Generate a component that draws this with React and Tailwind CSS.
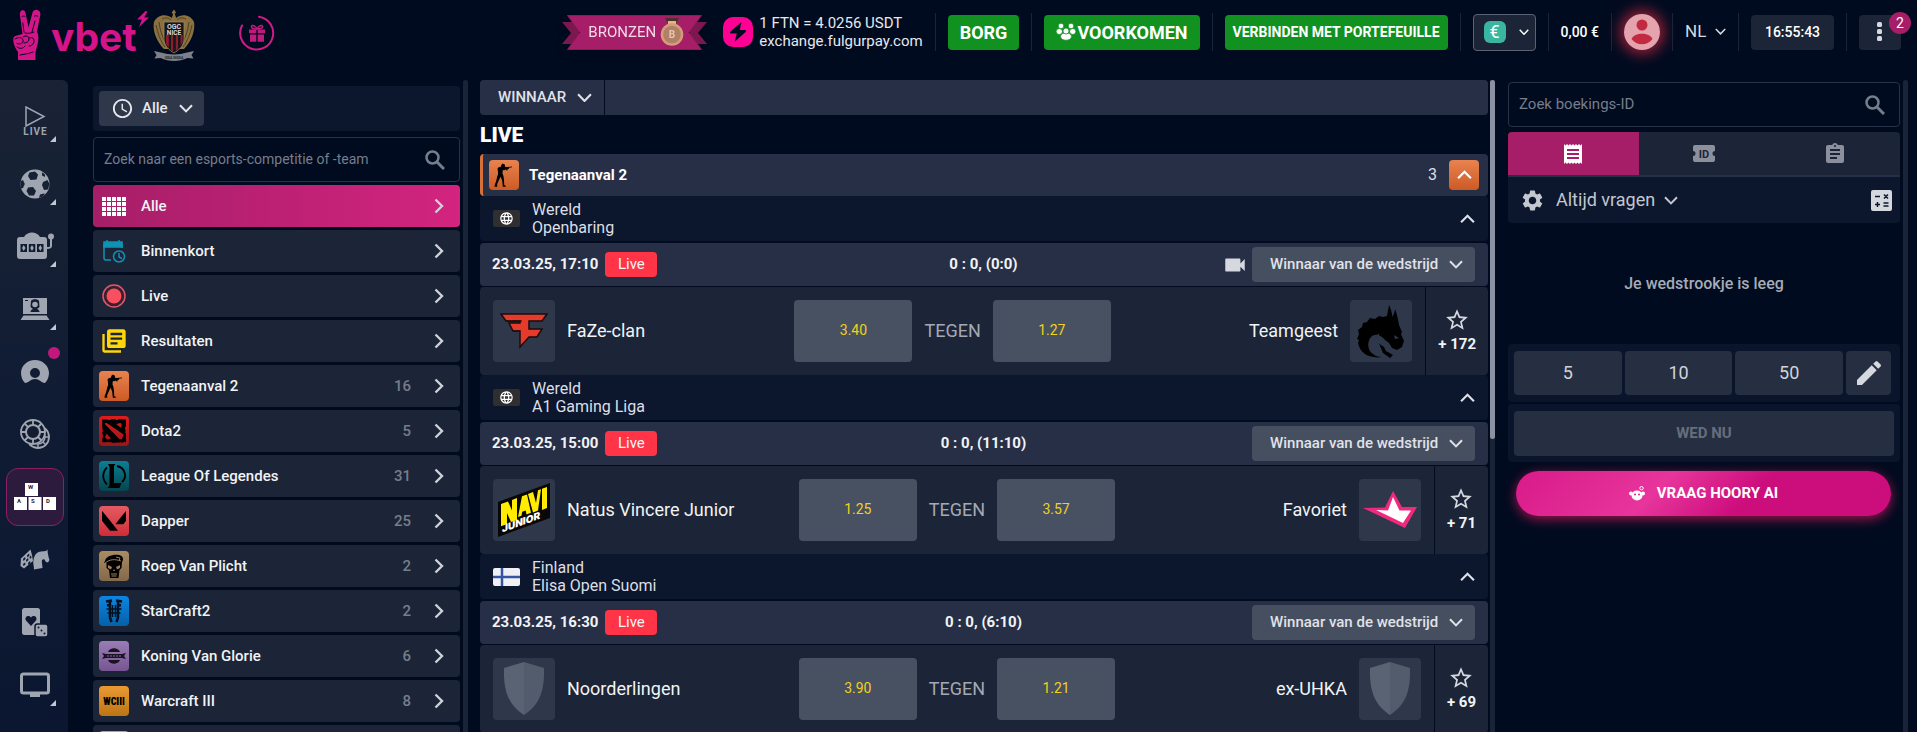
import React, { useState } from "react";
import {
  MdAccessTime,
  MdAssignment,
  MdEdit,
  MdLanguage,
  MdLibraryBooks,
  MdReceipt,
  MdSettings,
  MdStarOutline,
  MdVideocam,
} from "react-icons/md";
import { SiDota2, SiValorant } from "react-icons/si";

function Chevron({ className = "" }) {
  return (
    <svg viewBox="0 0 14 9" fill="none" stroke="currentColor" strokeWidth="2" className={`shrink-0 pointer-events-none ${className}`}>
      <path d="M1 1.2 7 7.4l6-6.2" />
    </svg>
  );
}

function ChevronRight({ className = "" }) {
  return (
    <svg viewBox="0 0 10 16" fill="none" stroke="currentColor" strokeWidth="2.4" className={`w-[10px] h-4 shrink-0 ${className}`}>
      <path d="m1.5 1.5 6.5 6.5-6.5 6.5" />
    </svg>
  );
}

function SearchIcon() {
  return (
    <svg viewBox="0 0 20 20" fill="none" stroke="currentColor" className="w-5 h-5 mr-[2px] shrink-0">
      <circle cx="7.500" cy="7.500" r="6" strokeWidth="2.500" />
      <path d="m12 12 7 7" strokeWidth="3" />
    </svg>
  );
}

/* ---------- header ---------- */

function HandLogo() {
  return (
    <svg viewBox="0 0 30 52" className="w-[30px] h-[52px]">
      <path
        fill="#d6148a"
        d="M8.500 2.500C9.500.600 12.500.700 13.300 3L16.500 18.500 20.500 3.500C21.300.700 24.500.300 26.500 1.400c2 1 2.100 3 1.700 5L25 22.500c1.800 3.500 1.700 8.500.500 13L23.500 43v8H6v-8C3 39 1.500 35 1.200 31c-.1-2.500 1.300-4.200 3.800-4.400l5.500-1.600L8 6.500c-.2-1.500-.1-2.800.5-4Z"
      />
      <g fill="none" stroke="#000b20" strokeWidth="1" strokeLinecap="round">
        <path d="M10 7.500c1-.6 2-.6 3-.1M22.500 7c1.200-.5 2.400-.3 3.300.2M10.800 14l1.200 9M23 12l-3 11" />
        <path d="M3 30c3-2 7-2 8 1s-3 5-6 3.500M11 28c3-2 6-1 6 2s-3 4-5 4M17 29c3-1 5 0 5 3s-2 5-5 5M5 38c3 2 6 2 8-1M8 46c4-1 9-1 13-3" />
        <path d="M13 24c3 1 6 0 9-1" />
      </g>
    </svg>
  );
}

function Bolt() {
  return (
    <svg viewBox="0 0 12 16" className="absolute -right-3 -top-[2px] w-3 h-4">
      <path fill="#d6148a" d="M8.500 0 0 8.500h4.800L2 16l10-9.500H7.200L10.500.500Z" />
    </svg>
  );
}

function NiceCrest() {
  return (
    <svg viewBox="0 0 42 54" className="w-[42px] h-[54px]">
      <path fill="#8b7140" d="M21 1.500l2 3-1.300 1.300 1.500 4.200C29 5 38 7 41 14c1.500 9-3 20-10 27H11C4 34-.8 23 1 14 4 7 13 5 18.800 10l1.300-4-1.600-1.200Z" />
      <g stroke="#4f3f22" strokeWidth="1" fill="none">
        <path d="M3 17c2 9 4 15 9 22M6 14c1 8 3 14 6 20M39 17c-2 9-4 15-9 22M36 14c-1 8-3 14-6 20M9 11c4-2 7-1 9 1M33 11c-4-2-7-1-9 1" />
      </g>
      <path fill="#16161c" stroke="#9b8a62" strokeWidth=".8" d="M11 14h20v17c0 7-5 11-10 14-5-3-10-7-10-14Z" />
      <path fill="#8d1c2c" d="M13 27h2.800v13L13 36Zm5 0h2.200v16.500L18 42Zm4.800 0H25v14l-2.200 2Zm4.800 0h2v7.500l-2 3Z" />
      <path fill="#7d8089" d="M1 43l7 1.500C16 47 26 47 34 44.500l7-1.500-2.500 4 2 3.500-6-.5C26 54 16 54 7.500 50l-6 .5 2-3.500Z" />
      <g fill="#d6d7db" fontFamily="Roboto, sans-serif" fontWeight="700" textAnchor="middle">
        <text x="21" y="21" fontSize="7">OGC</text>
        <text x="21" y="27" fontSize="6.500">NICE</text>
        <text x="21" y="51" fontSize="3.500" fill="#22252e">ISSA NISSA</text>
      </g>
    </svg>
  );
}

function GiftRing() {
  return (
    <svg viewBox="0 0 36 36" className="w-9 h-9">
      <path d="M20 1.700A16.500 16.500 0 1 1 3 10.500" fill="none" stroke="#d01b86" strokeWidth="2" strokeLinecap="round" />
      <g fill="#c01b7c">
        <path d="M10 14.500h7.300v3.800H10ZM18.700 14.500H26v3.800h-7.300ZM11 19.500h6.300v7.200H11ZM18.700 19.500H25v7.200h-6.300Z" />
      </g>
      <path d="M18 14c-1.500-3.500-5-4.500-5.500-2.500S15 14 18 14Zm0 0c1.500-3.500 5-4.500 5.500-2.500S21 14 18 14Z" fill="none" stroke="#c01b7c" strokeWidth="1.500" />
    </svg>
  );
}

function Ribbon() {
  return (
    <a href="#bronzen" className="relative block w-[145px] h-[35px] mr-1 drop-shadow-lg">
      <svg viewBox="0 0 145 35" className="absolute inset-0 w-full h-full">
        <path fill="#7c174f" d="M0 7h17v22H0l9-11ZM145 7h-17v22h17l-9-11Z" />
        <path fill="#a51e67" stroke="#8c1a5a" strokeWidth="1" d="M5.500.500h134L127 17.500l12.500 17H5.500L18 17.500Z" />
      </svg>
      <span className="relative flex items-center h-full pl-[26px] gap-1 text-[15px] text-[#f4d9e8]">
        BRONZEN
        <svg viewBox="0 0 24 28" className="w-6 h-7 shrink-0">
          <path fill="#4a3427" d="M5 0h14l-2.500 5h-9Z" />
          <path fill="#e3b48f" d="M8 3h8v3H8Z" />
          <circle cx="12" cy="16.500" r="11.300" fill="#d69c78" />
          <circle cx="12" cy="16.500" r="8.800" fill="#b08068" />
          <text x="12" y="20" fontSize="10" fontWeight="700" textAnchor="middle" fill="#e8c6ae" fontFamily="Roboto, sans-serif">B</text>
        </svg>
      </span>
    </a>
  );
}

function People() {
  return (
    <svg viewBox="0 0 20 18" className="w-5 h-[18px]" fill="#fff" stroke="#109120" strokeWidth=".8">
      <circle cx="5" cy="3" r="2.800" />
      <circle cx="15" cy="3" r="2.800" />
      <ellipse cx="3.300" cy="8.500" rx="3.200" ry="3" />
      <ellipse cx="16.700" cy="8.500" rx="3.200" ry="3" />
      <path d="M4.500 13.500c0-5 11-5 11 0 0 5-11 5-11 0Z" />
      <circle cx="10" cy="8" r="3" />
    </svg>
  );
}

const Sep = () => <span className="w-px h-[38px] bg-[#1a2438] shrink-0" />;

function Header() {
  return (
    <header className="flex items-start justify-between h-20 pl-3 pr-4 shrink-0">
      <div className="flex items-center">
        <a href="#home" aria-label="vbet" className="flex items-start pt-[7px]">
          <HandLogo />
          <span className="relative ml-[9px] mt-1 font-['Inter',sans-serif] font-bold text-[39px] leading-[48px] text-[#d6148a]">
            vbet
            <Bolt />
          </span>
        </a>
        <a href="#nice" aria-label="OGC Nice" className="ml-4 mt-2"><NiceCrest /></a>
        <a href="#bonus" aria-label="Bonus" className="ml-11 mt-1"><GiftRing /></a>
      </div>

      <div className="flex items-center gap-3 pt-[13px] h-[51px] whitespace-nowrap text-white">
        <Ribbon />
        <a href="#fulgurpay" className="flex items-center gap-[6px] text-[15px] leading-[18px] text-[#e6e8ed]">
          <svg viewBox="0 0 30 30" className="w-[30px] h-[30px]">
            <rect width="30" height="30" rx="10" fill="#ff0094" />
            <path fill="#000b20" d="M18.500 5 7.500 14.500c-1 1.200-.5 2 .8 2h5.500L11.500 25l11-10c1-1.200.4-2-.8-2h-5Z" />
          </svg>
          <span>1 FTN = 4.0256 USDT<br />exchange.fulgurpay.com</span>
        </a>
        <Sep />
        <button className="h-[35px] px-3 rounded bg-[#109120] font-bold text-lg leading-[35px]">BORG</button>
        <Sep />
        <button className="flex items-center gap-px h-[35px] px-3 rounded bg-[#109120] font-bold text-lg leading-[35px]"><People />VOORKOMEN</button>
        <Sep />
        <button className="h-[35px] px-2 rounded bg-[#109120] font-bold text-[14px]">VERBINDEN MET PORTEFEUILLE</button>
        <Sep />
        <label className="flex items-center h-[37px] pl-[10px] pr-[6px] gap-[13px] rounded border border-[#5a6273] bg-[#1b2537]">
          <select aria-label="Valuta" className="appearance-none w-[22px] h-[22px] rounded-md bg-[#3ab5a0] text-white text-lg leading-[22px] text-center">
            <option>€</option>
          </select>
          <Chevron className="w-[10px]" />
        </label>
        <Sep />
        <span className="text-[14px] font-medium">0,00 €</span>
        <Sep />
        <button aria-label="Profiel" className="w-9 h-9 rounded-full shadow-[0_0_14px_4px_#9c2036]">
          <svg viewBox="0 0 36 36">
            <circle cx="18" cy="18" r="18" fill="#e5a3ae" />
            <circle cx="18" cy="11" r="5.500" fill="#c22a42" />
            <path fill="#c22a42" d="M7.500 25c3-7 18-7 21 0-5 7-16 7-21 0Z" />
          </svg>
        </button>
        <Sep />
        <label className="flex items-center gap-2 text-[#d5d8df]">
          <select aria-label="Taal" className="appearance-none text-[17px]"><option>NL</option></select>
          <Chevron className="w-[11px]" />
        </label>
        <Sep />
        <time className="flex items-center justify-center w-[83px] h-[35px] rounded bg-[#1b2537] text-[14px] font-medium">16:55:43</time>
        <Sep />
        <button aria-label="Menu" className="relative flex items-center justify-center w-[42px] h-[35px] rounded bg-[#1b2537]">
          <svg viewBox="0 0 6 20" className="w-[6px] h-5 fill-[#d5d8df]">
            <rect width="5" height="5" rx="1.500" /><rect y="7" width="5" height="5" rx="1.500" /><rect y="14" width="5" height="5" rx="1.500" />
          </svg>
          <span className="absolute -right-[10px] -top-[3px] w-[22px] h-[22px] rounded-full bg-[#a51e67] text-[14px] leading-[22px] text-center">2</span>
        </button>
      </div>
    </header>
  );
}

/* ---------- icon rail ---------- */

const railItems = [
  {
    name: "Live", more: true,
    icon: (
      <svg viewBox="0 0 30 30" className="w-[30px] h-[30px]">
        <path d="M6 1v19L24 10.500Z" fill="none" stroke="currentColor" strokeWidth="1.500" />
        <text x="15.500" y="29" fontSize="10" fontWeight="700" letterSpacing="1" textAnchor="middle" fill="currentColor" fontFamily="Roboto, sans-serif">LIVE</text>
      </svg>
    ),
  },
  {
    name: "Sport", more: true,
    icon: (
      <svg viewBox="0 0 30 30" className="w-[30px] h-[30px]">
        <circle cx="15" cy="15" r="14.500" fill="currentColor" />
        <g fill="#172136">
          <path d="m9.500 3.500 5.500-1 3 3-1.500 5-6 .5L8 7Z" />
          <path d="m23 13 4.500-2 2 4-1.500 5.500-4 .5L22 16Z" />
          <path d="m8 18.500 5-.5 3 4-2 4.500H9L6.500 22Z" />
          <path d="M.8 12 3 11l1.800 4L3 19l-1.800.5C.3 17 .3 14.500.8 12Z" />
          <path d="m20 25.500 4-1 1 .5c-2 2.200-3.500 3-6 4Z" />
          <path d="m22 3.300 3 2.300v2.400l-3-1.500Z" />
        </g>
      </svg>
    ),
  },
  {
    name: "Casino", more: true,
    icon: (
      <svg viewBox="0 0 38 28" className="w-[38px] h-7" fill="currentColor">
        <path d="M4 5h4c3-6 13-6 16 0h4c2 0 3 1 3 3v16c0 2-1 3-3 3H4c-2 0-3-1-3-3V8c0-2 1-3 3-3Z" />
        <circle cx="35" cy="4.500" r="3" />
        <path d="M34 7h2v7c0 2-2 3-5 3v-2c2 0 3 0 3-1Z" />
        <path fill="#131d31" d="M4.500 12h6.500v8H4.500ZM12.800 12h6.500v8h-6.500ZM21 12h6.500v8H21Z" />
        <path d="m7.700 13 1.800 3-1.800 3L6 16ZM16 13l1.800 3-1.800 3-1.800-3ZM24.300 13l1.800 3-1.800 3-1.800-3Z" />
      </svg>
    ),
  },
  {
    name: "Live casino", more: true,
    icon: (
      <svg viewBox="0 0 30 24" className="w-[30px] h-6" fill="currentColor">
        <path d="M3 1h24v16H3ZM3.500 18.500h23L29.500 23H.500Z" />
        <path fill="#131d31" d="M11 4c1-2.500 7-2.500 8 0l.5 6-2.500 2c1.500.7 2.500 1.500 2.500 3h-9c0-1.500 1-2.300 2.500-3L10.500 10ZM5 3h3v1H5Z" />
        <circle cx="15" cy="7.500" r="2.800" />
      </svg>
    ),
  },
  {
    name: "Spelers", dot: true,
    icon: (
      <svg viewBox="0 0 30 26" className="w-[30px] h-[26px]" fill="currentColor">
        <path fillRule="evenodd" d="M15 1C7 1 1 7 1 14c0 3.500 1.300 7 3.500 9.500C7 25.500 10 20 15 20s8 5.500 10.500 3.500C27.700 21 29 17.500 29 14 29 7 23 1 15 1Zm0 8a5 5 0 1 1 0 10 5 5 0 0 1 0-10Z" />
      </svg>
    ),
  },
  {
    name: "Poker",
    icon: (
      <svg viewBox="0 0 30 30" className="w-[30px] h-[30px]" fill="none" stroke="currentColor">
        <circle cx="18" cy="18" r="11" strokeWidth="1.800" />
        <circle cx="18" cy="18" r="7" strokeWidth="1.500" />
        <path d="M18 25v4M25 18h4M23 23l3 3M23 13l3-3M12 24l-2 3" strokeWidth="1.500" />
        <circle cx="13" cy="13" r="12" strokeWidth="1.800" fill="#131d31" />
        <path d="M13 1v5M13 20v5M1 13h5M20 13h5M4.500 4.500 8 8M18 18l3.500 3.500M4.500 21.500 8 18M18 8l3.500-3.500" strokeWidth="1.800" />
        <circle cx="13" cy="13" r="7" strokeWidth="2" />
      </svg>
    ),
  },
  {
    name: "Esports", active: true,
    icon: (
      <svg viewBox="0 0 42 27" className="w-[42px] h-[27px]" fontFamily="Roboto, sans-serif" fontSize="6" fontWeight="700">
        <path fill="#fff" d="M11 0h13v13H11ZM0 14h13v13H0ZM14.500 14h13v13h-13ZM29 14h13v13H29Z" />
        <g fill="#2d1b3d"><text x="14" y="6">W</text><text x="3" y="20">A</text><text x="17" y="20">S</text><text x="32" y="20">D</text></g>
      </svg>
    ),
  },
  {
    name: "Virtueel",
    icon: (
      <svg viewBox="0 0 30 21" className="w-[30px] h-[21px]" fill="currentColor">
        <path d="M1 9.500 10.500.500 12 6l1 6-9 7.500L.500 17Z" />
        <g fill="#0d1830">
          <path d="m3 10 2-2 .5 2-2 2ZM7 6.500l2-2 .5 2-2 2ZM6 11l2-2 .5 2-2 2ZM9.500 8l1.500-1.500.5 2L10 10ZM3 15l2-1.500.5 2-2 1.500ZM8 14l2-2 .5 2-2 2Z" />
        </g>
        <path d="M14 20.500c.3-3-1.500-6-.5-9.500C14 6 17 3 21 2.500l5-.5 1.500-1.500.3 3.500c.5 3 1 5 1.700 7l-1.500 2.500-2-.5-2-3-2 1c-.5 3 .5 5 .5 8Z" />
      </svg>
    ),
  },
  {
    name: "Kaarten",
    icon: (
      <svg viewBox="0 0 28 30" className="w-7 h-[30px]" fill="currentColor">
        <rect x="1" y="1" width="18" height="27" rx="2.500" />
        <path fill="#0d1830" d="M10 19 5 13.500c-2-3 2-6.500 5-3 3-3.500 7 0 5 3Z" />
        <rect x="14" y="17" width="13" height="13" rx="2.500" stroke="#0d1830" strokeWidth="1.500" />
        <g fill="#0d1830"><circle cx="17.500" cy="20.500" r="1" /><circle cx="20.500" cy="23.500" r="1" /><circle cx="23.500" cy="26.500" r="1" /></g>
      </svg>
    ),
  },
  {
    name: "TV", more: true,
    icon: (
      <svg viewBox="0 0 30 26" className="w-[30px] h-[26px]">
        <rect x="1.500" y="2" width="27" height="19" rx="2" fill="none" stroke="currentColor" strokeWidth="3" />
        <path d="M10 21h10v4H10Z" fill="currentColor" />
      </svg>
    ),
  },
];

function Rail() {
  return (
    <nav className="flex flex-col justify-between items-end w-[68px] pt-3 pb-[18px] pr-1 shrink-0 rounded-tr-md bg-linear-to-b from-[#1a2335] via-[#101c34] to-[#0b1730]">
      {railItems.map((item) => (
        <a
          key={item.name}
          href="#rail"
          aria-label={item.name}
          className={`relative flex items-center justify-center w-[58px] h-[58px] shrink-0 text-[#9fa5b1] ${item.active ? "rounded-xl border border-[#8d1f66] bg-[#2d1b3d]" : ""}`}
        >
          {item.icon}
          {item.more && (
            <svg viewBox="0 0 6 6" className="absolute right-2 bottom-2 w-[6px] h-[6px]" fill="#c3c7cf"><path d="M6 0v6H0Z" /></svg>
          )}
          {item.dot && <span className="absolute right-1 top-1 w-3 h-3 rounded-full bg-[#c2187c]" />}
        </a>
      ))}
    </nav>
  );
}

/* ---------- games list ---------- */

const tile = "flex items-center justify-center w-[30px] h-[30px] rounded text-black bg-linear-to-b";

// rifleman facing right
const Soldier = () => (
  <svg viewBox="0 0 20 24" className="w-5 h-6">
    <path d="M8 .800c1.700-.5 3 .2 3 1.900l-.2 1.100 2.200.2 5-.6v.9l-3 .5.1 1-1.600.1.200 1.400-1.200.1-.5-1-1.700.9-1.500-.2-.3 3.400.9 2.200.6 4 .2 5.300 1.600 1v.7H8.800l-.1-1.400-.6-5-1.600-3.500-1.600 3.500-1.700 3.800-.1 1.700.3.900H.500l.2-1.600L2.200 18l1-4.500.9-2.300L3.900 8 3.500 5.500l1.200-1.200 2-.6Z" />
  </svg>
);

const League = () => (
  <svg viewBox="0 0 24 26" className="w-6 h-[26px]">
    <path d="M6 1h7.500L12 3v17h7.500L17.500 25H5.500L7.500 22V4Z" />
    <path d="M5 4.500c-5 5-5 12 0 17M15 3c9 2 10 12 5 16" fill="none" stroke="#000" strokeWidth="1.800" />
  </svg>
);

const games = [
  {
    name: "Alle",
    icon: (
      <svg viewBox="0 0 24 19" className="w-6 h-[19px] fill-white">
        {[0, 1, 2, 3].map((r) => [0, 1, 2, 3, 4].map((c) => <rect key={`${r}-${c}`} x={c * 5} y={r * 5} width="4" height="4" />))}
      </svg>
    ),
  },
  {
    name: "Binnenkort",
    icon: (
      <svg viewBox="0 0 24 24" className="w-6 h-6" fill="none" stroke="#0f93b4" strokeWidth="1.500">
        <path d="M9 21H4a2 2 0 0 1-2-2V5M20 4v5" />
        <path d="M2 3h18v5H2ZM5 1v3M17 1v3" fill="#0f93b4" />
        <circle cx="17" cy="17.500" r="5.500" />
        <path d="M17 14v4l3 1.500" />
      </svg>
    ),
  },
  {
    name: "Live",
    icon: (
      <svg viewBox="0 0 24 24" className="w-6 h-6">
        <circle cx="12" cy="12" r="11" fill="#3a1f31" stroke="#e0596b" strokeWidth="1.500" />
        <circle cx="12" cy="12" r="7.500" fill="#f9505f" />
      </svg>
    ),
  },
  { name: "Resultaten", icon: <MdLibraryBooks className="w-7 h-7 text-[#ffd60a]" /> },
  { name: "Tegenaanval 2", count: 16, icon: <span className={`${tile} from-[#e8834f] to-[#cd5a24]`}><Soldier /></span> },
  { name: "Dota2", count: 5, icon: <span className={`${tile} from-[#de1c1c] to-[#9a1419]`}><SiDota2 className="w-6 h-6" /></span> },
  { name: "League Of Legendes", count: 31, icon: <span className={`${tile} from-[#0b7f95] to-[#064450]`}><League /></span> },
  { name: "Dapper", count: 25, icon: <span className={`${tile} from-[#e55a63] to-[#cf2b38]`}><SiValorant className="w-6 h-6" /></span> },
  {
    name: "Roep Van Plicht", count: 2,
    icon: (
      <span className={`${tile} from-[#a98c64] to-[#84694a]`}>
        <svg viewBox="0 0 24 26" className="w-6 h-[26px]">
          <path d="M3 8C4 3 11 1 17 2c4 1 5 4 3 7l-.5 6-2 2-1 8H8l-1-8-2.500-2V10L2 10Z" />
          <path fill="none" stroke="#9c8059" strokeWidth="1" d="M3 10c5-4 10-4 16-2M9 21h6M9.500 23h5M14 4l4 1-1 3" />
          <path fill="#9c8059" d="m6 12 4 2-1 2.500-3-1.500Zm12 0-4 2 1 2.500 3-1.500Zm-6 4 1 2h-2Z" />
        </svg>
      </span>
    ),
  },
  {
    name: "StarCraft2", count: 2,
    icon: (
      <span className={`${tile} from-[#0b86e3] to-[#0560a8]`}>
        <svg viewBox="0 0 18 24" className="w-[18px] h-6" fill="none" stroke="#03101f" strokeWidth="2.500">
          <path d="M5 1.500v17l1.500 4.500M13 1.500v17L11.500 23M1 2.500l6-1M17 2.500l-6-1M2 6.500l4-1M16 6.500l-4-1" />
          <path d="M1.500 10h15M2.500 14h13M7.500 6v12M10.500 6v12" strokeWidth="1.500" />
        </svg>
      </span>
    ),
  },
  {
    name: "Koning Van Glorie", count: 6,
    icon: (
      <span className={`${tile} from-[#9a7db5] to-[#775593]`}>
        <svg viewBox="0 0 24 16" className="w-6 h-4" fill="#1a1322">
          <path d="M6 4c2-5 10-5 12 0Zm0 8c2 5 10 5 12 0ZM0 5l4 1h16l4-1-2 3 2 3-4-1H4l-4 1 2-3Z" />
          <path d="M5 8h14" stroke="#8a6ba5" strokeWidth="1" strokeDasharray="2 1" />
        </svg>
      </span>
    ),
  },
  {
    name: "Warcraft III", count: 8,
    icon: <span className={`${tile} from-[#eb9a32] to-[#bd7416] font-['Roboto_Condensed',Roboto,sans-serif] font-black text-[10px]`}>WCIII</span>,
  },
  { name: "", icon: <span className={`${tile} from-[#b9a184] to-[#84694a]`} /> },
];

function Games() {
  const [selected, setSelected] = useState("Alle");

  return (
    <aside className="flex gap-[3px] w-[375px] ml-[25px] shrink-0 overflow-hidden">
      <div className="flex-1 pt-[6px]">
        <div className="h-[45px] p-[6px] pt-[5px] rounded bg-[#0c162d]">
          <label className="flex items-center w-[105px] h-[35px] pl-3 rounded bg-[#2e384a] text-[#e6e8ed]">
            <MdAccessTime className="w-[23px] h-[23px] mr-2" />
            <select aria-label="Periode" className="appearance-none text-[15px] font-medium"><option>Alle</option></select>
            <Chevron className="w-[14px] ml-[11px]" />
          </label>
        </div>
        <label className="flex items-center h-[45px] mt-[6px] pl-[10px] pr-3 rounded border border-[#27314a] text-[#767d8b]">
          <input
            type="text"
            aria-label="Zoek competitie of team"
            placeholder="Zoek naar een esports-competitie of -team"
            className="flex-1 min-w-0 text-[14px] outline-none placeholder:text-[#767d8b]"
          />
          <SearchIcon />
        </label>
        <div className="flex flex-col gap-[3px] mt-[3px]">
          {games.map((game) => (
            <button
              key={game.name}
              onClick={() => setSelected(game.name)}
              className={`flex items-center h-[42px] pl-[6px] pr-4 shrink-0 rounded text-[15px] font-medium text-[#f2f3f5] ${game.name === selected ? "bg-linear-to-r from-[#a61e68] to-[#d3247f]" : "bg-[#1b2537]"}`}
            >
              <span className="flex items-center justify-center w-[30px]">{game.icon}</span>
              <span className="ml-3">{game.name}</span>
              <span className="ml-auto mr-[23px] font-medium text-[#767d8b]">{game.count}</span>
              <ChevronRight className="text-[#ced1d8]" />
            </button>
          ))}
        </div>
      </div>
      <div className="w-[5px] rounded-t-full bg-[#1a2438]" />
    </aside>
  );
}

/* ---------- match list ---------- */

const Shield = () => (
  <svg viewBox="0 0 42 54" className="w-[42px] h-[54px]">
    <path fill="#5a6373" d="M21 0v53C9 45 0 34 1 6Z" />
    <path fill="#525c6c" d="M21 0v53c12-8 21-19 20-47Z" />
  </svg>
);

const Faze = () => (
  <svg viewBox="0 0 48 36" className="w-12 h-9">
    <path fill="#e63b2b" stroke="#1a0c0c" strokeWidth="1.500" d="M1 1h46l-5 7H29v8h13l-5 8h-8l-9 10V18h-7L9 10h11V8H6Z" />
    <path stroke="#1a0c0c" strokeWidth="1.200" d="M6 8h16M13 18h7" />
  </svg>
);

const Dragon = () => (
  <svg viewBox="0 0 48 54" className="w-12 h-[54px]">
    <path d="M32 1c2 4 3 8 3.500 12C37 10 38 7 38 5c2 5 3 10 4 16l3 7-1 2 3 7-2 6-5 3-5-2-3-5-4-3c-4-5-10-7-14-3-4 5-4 13 2 17 2 2 5 3 9 3C12 55 3 49 1 39l1-3-2-1 2-5-1-4 4-3 1-4 4-1 3-4 5 1 4-3 4 1 4-1Z" />
    <path d="M21 39l6 4 2 4 7 4-3 3-7-5-2-5Z" />
    <path fill="none" stroke="#2e384a" strokeWidth="1.200" d="M22 30c-4 4-3 9 1 12M27 35c-2 3-1 6 2 8" />
    <path fill="#2e384a" d="m37 31 5 3-4 1Z" />
  </svg>
);

const NaviJunior = () => (
  <svg viewBox="0 0 52 54" className="w-[52px] h-[54px]">
    <path fill="#080808" d="M0 19 52 0v35L0 54Z" />
    <g fill="#ffec00">
      <path d="m3 21 7-2.600 4 9V17l5-1.900v22L13 39l-4-9v11l-6 2.200Z" />
      <path d="m20 34 4-20.700 5-1.900 4 18.400-4.500 1.700-.8-4-3.500 1.300-.7 4Z" />
      <path d="m30 11 5-1.900 3 11L40 7.300l3-1.100-3 21.300-5 1.900ZM44 5.800l5-1.900v21.200L44 27Z" />
    </g>
    <text transform="skewY(-20)" x="4" y="51" fontSize="10" fontWeight="900" fill="#fff" fontFamily="Inter, sans-serif">JUNIOR</text>
  </svg>
);

const Favbet = () => (
  <svg viewBox="0 0 54 38" className="w-[54px] h-[38px]">
    <path fill="#f0297e" d="M30 0l9 16h15L42 37 0 17l22-.500Z" />
    <path fill="#fff" d="m30 6 6.500 13.500H48L40 32 13 19l12 .500Z" />
  </svg>
);

const WorldFlag = () => (
  <span className="flex items-center justify-center w-[27px] h-[17px] rounded-xs bg-[#2f2e31]"><MdLanguage className="w-[15px] h-[15px] text-white" /></span>
);

const FinlandFlag = () => (
  <svg viewBox="0 0 27 18" className="w-[27px] h-[18px] rounded-xs">
    <path fill="#eef0f5" d="M0 0h27v18H0Z" />
    <path stroke="#3553a0" strokeWidth="2.500" d="M0 9h27M9 0v18" />
  </svg>
);

const matches = [
  {
    country: "Wereld", league: "Openbaring", flag: <WorldFlag />,
    date: "23.03.25, 17:10", score: "0 : 0, (0:0)", video: true, extra: 172,
    home: "FaZe-clan", away: "Teamgeest", homeLogo: <Faze />, awayLogo: <Dragon />, odds: ["3.40", "1.27"],
  },
  {
    country: "Wereld", league: "A1 Gaming Liga", flag: <WorldFlag />,
    date: "23.03.25, 15:00", score: "0 : 0, (11:10)", extra: 71,
    home: "Natus Vincere Junior", away: "Favoriet", homeLogo: <NaviJunior />, awayLogo: <Favbet />, odds: ["1.25", "3.57"],
  },
  {
    country: "Finland", league: "Elisa Open Suomi", flag: <FinlandFlag />,
    date: "23.03.25, 16:30", score: "0 : 0, (6:10)", extra: 69,
    home: "Noorderlingen", away: "ex-UHKA", homeLogo: <Shield />, awayLogo: <Shield />, odds: ["3.90", "1.21"],
  },
];

function TeamLogo({ children }) {
  return <span className="flex items-center justify-center w-[62px] h-[62px] shrink-0 rounded bg-[#2e384a]">{children}</span>;
}

function OddsButton({ value }) {
  return <button className="w-[118px] h-[62px] rounded bg-[#485161] text-[14px] text-[#f0d11c]">{value}</button>;
}

function Match({ match }) {
  return (
    <section>
      <div className="flex items-center h-[45px] pl-[13px] pr-[13px] rounded bg-[#0c172d]">
        {match.flag}
        <div className="ml-3 text-base leading-[18px] text-[#dcdfe5]">
          <p>{match.country}</p>
          <p>{match.league}</p>
        </div>
        <button aria-label="Inklappen" className="ml-auto text-[#dcdfe5]"><Chevron className="w-[15px] rotate-180" /></button>
      </div>

      <div className="grid grid-cols-[1fr_auto_1fr] items-center h-[43px] mt-[2px] pl-3 pr-[13px] rounded bg-[#272f47] text-[15px] text-[#f2f3f5]">
        <div className="flex items-center gap-[7px]">
          <time className="font-bold">{match.date}</time>
          <span className="flex items-center justify-center w-[52px] h-[25px] rounded bg-[#ff3547]">Live</span>
        </div>
        <span className="font-bold">{match.score}</span>
        <div className="flex items-center justify-end gap-1">
          {match.video && <MdVideocam className="w-[26px] h-[26px] text-[#d5d8df]" />}
          <label className="flex items-center justify-between w-[223px] h-[35px] pl-[18px] pr-3 rounded bg-[#464f60] text-[#e0e2e8]">
            <select aria-label="Markt" className="appearance-none text-[15px] font-medium"><option>Winnaar van de wedstrijd</option></select>
            <Chevron className="w-[14px]" />
          </label>
        </div>
      </div>

      <div className="flex gap-px h-[88px] mt-px text-[#f2f3f5]">
        <div className="flex-1 grid grid-cols-[1fr_auto_1fr] items-center px-[13px] rounded-l bg-[#1b2537] text-lg">
          <div className="flex items-center gap-3">
            <TeamLogo>{match.homeLogo}</TeamLogo>
            <span>{match.home}</span>
          </div>
          <div className="flex items-center gap-3 text-[#a4a9b5]">
            <OddsButton value={match.odds[0]} />
            TEGEN
            <OddsButton value={match.odds[1]} />
          </div>
          <div className="flex items-center justify-end gap-3">
            <span>{match.away}</span>
            <TeamLogo>{match.awayLogo}</TeamLogo>
          </div>
        </div>
        <button className="flex flex-col items-center justify-center px-3 rounded-r bg-[#1b2537] text-[15px] font-bold">
          <MdStarOutline className="w-[26px] h-[26px] text-[#d5d8df]" />
          + {match.extra}
        </button>
      </div>
    </section>
  );
}

function Matches() {
  return (
    <main className="flex flex-1 gap-[2px] ml-3 min-w-0 overflow-hidden">
      <div className="flex-1 min-w-0">
        <div className="flex gap-px h-[35px] text-[15px] font-medium text-[#e0e2e8]">
          <label className="flex items-center gap-[10px] pl-[18px] pr-3 rounded-l bg-[#272f47]">
            <select aria-label="Soort" className="appearance-none"><option>WINNAAR</option></select>
            <Chevron className="w-[15px]" />
          </label>
          <div className="flex-1 rounded-r bg-[#272f47]" />
        </div>
        <h1 className="h-[39px] leading-[40px] text-[21px] font-black text-white">LIVE</h1>
        <div className="flex items-center h-[42px] pl-[6px] pr-[9px] rounded border-l-[3px] border-[#d9703a] bg-[#272f47] text-white">
          <span className={`${tile} from-[#e8834f] to-[#cd5a24]`}><Soldier /></span>
          <h2 className="ml-[10px] text-[15px] font-bold">Tegenaanval 2</h2>
          <span className="ml-auto mr-3 text-base text-[#dcdfe5]">3</span>
          <button aria-label="Inklappen" className={`${tile} from-[#e8834f] to-[#cd5a24]`}><Chevron className="w-[15px] rotate-180 text-white" /></button>
        </div>
        {matches.map((match) => <Match key={match.home} match={match} />)}
      </div>
      <div className="w-[5px] bg-[#1a2438]">
        <div className="h-[55%] rounded-full bg-[#8b91a0]" />
      </div>
    </main>
  );
}

/* ---------- bet slip ---------- */

const stakes = [5, 10, 50];

function BetSlip() {
  return (
    <aside className="flex gap-[3px] w-[400px] ml-[13px] mr-[9px] shrink-0">
      <div className="flex-1 pt-[2px]">
        <label className="flex items-center h-[45px] pl-[10px] pr-3 rounded border border-[#27314a] text-[#767d8b]">
          <input type="text" aria-label="Zoek boekings-ID" placeholder="Zoek boekings-ID" className="flex-1 min-w-0 text-[15px] outline-none placeholder:text-[#767d8b]" />
          <SearchIcon />
        </label>

        <div className="grid grid-cols-3 h-[45px] mt-[5px] rounded-t overflow-hidden border-b-2 border-[#272f47] bg-[#1b2537] text-[#8b909c]">
          <button aria-label="Wedstrook" className="flex items-center justify-center bg-[#a51e67] text-white"><MdReceipt className="w-6 h-6" /></button>
          <button aria-label="ID" className="flex items-center justify-center">
            <svg viewBox="0 0 22 17" className="w-[22px] h-[17px]">
              <path fill="currentColor" d="M2 0h18a2 2 0 0 1 2 2v4a2.500 2.500 0 0 0 0 5v4a2 2 0 0 1-2 2H2a2 2 0 0 1-2-2v-4a2.500 2.500 0 0 0 0-5V2a2 2 0 0 1 2-2Z" />
              <text x="11" y="12.500" fontSize="11" fontWeight="700" textAnchor="middle" fill="#1b2537" fontFamily="Roboto, sans-serif">ID</text>
            </svg>
          </button>
          <button aria-label="Mijn weddenschappen" className="flex items-center justify-center"><MdAssignment className="w-6 h-6" /></button>
        </div>

        <div className="flex items-center h-[46px] pl-3 pr-2 rounded-b bg-[#0c172d] text-[#c3c7cf]">
          <MdSettings className="w-[25px] h-[25px]" />
          <label className="flex items-center gap-2 ml-[11px]">
            <select aria-label="Quote wijzigingen" className="appearance-none text-lg"><option>Altijd vragen</option></select>
            <Chevron className="w-[14px]" />
          </label>
          <button aria-label="Rekenmachine" className="ml-auto">
            <svg viewBox="0 0 21 21" className="w-[21px] h-[21px]">
              <rect width="21" height="21" rx="2" fill="#d5d8df" />
              <path d="M4 6.500h5M13 4.500l4 4m0-4-4 4M4 14.500h5M6.500 12v5M12.500 13h5M12.500 16h5" stroke="#0c172d" strokeWidth="1.500" />
            </svg>
          </button>
        </div>

        <p className="h-[121px] leading-[121px] text-center text-base font-medium text-[#a6acb7]">Je wedstrookje is leeg</p>

        <div className="flex gap-[3px] h-[58px] pl-[6px] pr-[9px] py-[7px] rounded bg-[#0a142a]">
          {stakes.map((stake) => (
            <button key={stake} className="flex-1 rounded bg-[#252f41] text-lg text-[#d0d3da]">{stake}</button>
          ))}
          <button aria-label="Bewerken" className="flex items-center justify-center w-[45px] rounded bg-[#252f41] text-[#d5d8df]"><MdEdit className="w-8 h-8" /></button>
        </div>
        <div className="h-[58px] mt-[2px] px-[6px] py-[7px] rounded bg-[#0a142a]">
          <button disabled className="w-full h-[45px] rounded bg-[#252f41] text-[15px] font-bold text-[#666e7c]">WED NU</button>
        </div>
        <div className="pl-2 pr-[9px] mt-[9px]">
          <button className="flex items-center justify-center gap-3 w-full h-[45px] rounded-full bg-[linear-gradient(135deg,#d81a88_0%,#e7359c_38%,#cc0d7c_62%)] shadow-[0_3px_12px_#a0144c] text-[15px] font-bold text-white">
            <svg viewBox="0 0 16 15" className="w-4 h-[15px] fill-white">
              <circle cx="2" cy="7.500" r="2" /><circle cx="14" cy="7.500" r="2" />
              <ellipse cx="8" cy="9.500" rx="5.500" ry="5" />
              <circle cx="12.500" cy="2.200" r="1.700" fill="none" stroke="#fff" />
              <circle cx="6" cy="8.500" r="1" fill="#d92590" /><circle cx="10" cy="8.500" r="1" fill="#d92590" />
            </svg>
            VRAAG HOORY AI
          </button>
        </div>
      </div>
      <div className="w-[5px] rounded-t-full bg-[#1a2438]" />
    </aside>
  );
}

export default function App() {
  return (
    <div className="flex flex-col h-screen overflow-hidden bg-[#000b20] font-['Roboto',sans-serif]">
      <Header />
      <div className="flex flex-1 min-h-0">
        <Rail />
        <Games />
        <Matches />
        <BetSlip />
      </div>
    </div>
  );
}
